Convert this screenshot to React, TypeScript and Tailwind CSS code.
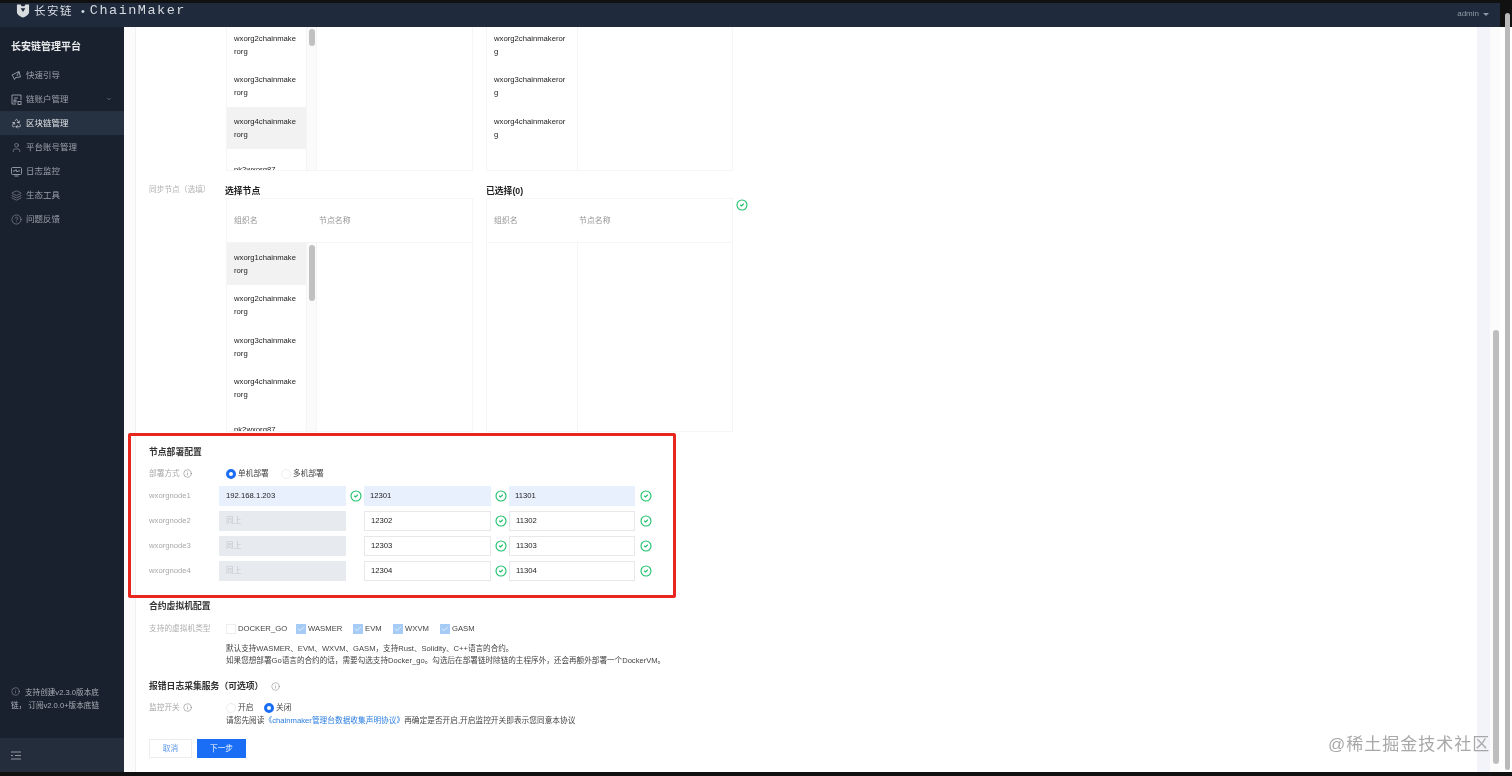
import { ChevronDown, CircleCheck, CircleHelp, Info, Layers, Check, Recycle, User } from 'lucide-react'
import type { ReactNode } from 'react'

const font = { cjk: 'font-["Liberation_Sans","Noto_Sans_CJK_SC",sans-serif]' }

function TagIcon() {
  return (
    <svg width="11" height="11" viewBox="0 0 11 11" fill="none" stroke="currentColor" strokeWidth="0.9">
      <path d="M1 5l7-3.500 1.500 5.500-5 .5-1 2-1.200-2.500L1 5z" />
      <path d="M8 1.500L6 6" />
    </svg>
  )
}

function FileIcon() {
  return (
    <svg width="11" height="11" viewBox="0 0 11 11" fill="none" stroke="currentColor" strokeWidth="0.9">
      <path d="M5 10H1V1h9v5" />
      <path d="M3 4h4" />
      <rect x="3" y="6" width="2" height="2" />
      <rect x="7" y="7.500" width="3" height="3" />
    </svg>
  )
}

function PulseIcon() {
  return (
    <svg width="11" height="11" viewBox="0 0 11 11" fill="none" stroke="currentColor" strokeWidth="0.9">
      <rect x="0.500" y="1.500" width="10" height="7" rx="1" />
      <path d="M2 5h2l1-1.500L6 6l1-1h2M3.500 10h4" />
    </svg>
  )
}

const menu: { label: string; icon: ReactNode; arrow?: boolean; active?: boolean }[] = [
  { label: '快速引导', icon: <TagIcon /> },
  { label: '链账户管理', icon: <FileIcon />, arrow: true },
  { label: '区块链管理', icon: <Recycle size={11} strokeWidth={1.4} />, active: true },
  { label: '平台账号管理', icon: <User size={11} strokeWidth={1.3} /> },
  { label: '日志监控', icon: <PulseIcon /> },
  { label: '生态工具', icon: <Layers size={11} strokeWidth={1.2} /> },
  { label: '问题反馈', icon: <CircleHelp size={11} strokeWidth={1.2} /> },
]

const nodes = [
  { name: 'wxorgnode1', ip: '192.168.1.203', rpc: '12301', p2p: '11301', first: true },
  { name: 'wxorgnode2', ip: '同上', rpc: '12302', p2p: '11302' },
  { name: 'wxorgnode3', ip: '同上', rpc: '12303', p2p: '11303' },
  { name: 'wxorgnode4', ip: '同上', rpc: '12304', p2p: '11304' },
]

const vmTypes = [
  { label: 'DOCKER_GO', on: false, w: 'w-[70px]' },
  { label: 'WASMER', on: true, w: 'w-[57px]' },
  { label: 'EVM', on: true, w: 'w-[40px]' },
  { label: 'WXVM', on: true, w: 'w-[47px]' },
  { label: 'GASM', on: true, w: 'w-[50px]' },
]

function Green() {
  return <CircleCheck size={12} strokeWidth={2.25} className="text-[#1fc06b]" />
}

function Radio({ on, label, w }: { on: boolean; label: string; w: string }) {
  return (
    <div className={`flex items-center gap-[2px] ${w}`}>
      {on ? (
        <span className="h-[10px] w-[10px] rounded-full border-[3px] border-[#1a6ef5] bg-white" />
      ) : (
        <span className="h-[10px] w-[10px] rounded-full border border-[#eeeeee] bg-white" />
      )}
      <span className="text-[7.7px] text-[#444]">{label}</span>
    </div>
  )
}

function OrgRow({ text, selected, late }: { text: string; selected?: boolean; late?: boolean }) {
  return (
    <div
      className={`h-[41.5px] shrink-0 break-all pl-[7px] pr-[8px] text-[7.7px] leading-[13px] text-[#222] ${
        late ? 'pt-[14px]' : 'flex items-center'
      } ${selected ? 'bg-[#f2f2f2]' : ''}`}
    >
      <span>{text}</span>
    </div>
  )
}

// lista de organizaciones con barra de scroll
function LeftBody({ selected, thumb, height, shift }: { selected: number; thumb: string; height: string; shift: string }) {
  const orgs = ['wxorg1chainmakerorg', 'wxorg2chainmakerorg', 'wxorg3chainmakerorg', 'wxorg4chainmakerorg']
  return (
    <div className={`flex w-[247px] overflow-hidden border border-t-0 border-[#f5f5f5] ${height}`}>
      <div className="w-[79px] shrink-0 overflow-hidden">
        <div className={`flex flex-col ${shift}`}>
          {orgs.slice(selected === 0 ? 0 : 1).map((o, i) => (
            <OrgRow key={o} text={o} selected={(selected === 0 ? i : i + 1) === selected} />
          ))}
          <OrgRow text="pk2wxorg87" late />
        </div>
      </div>
      <div className="w-[11px] shrink-0 border-x border-[#f5f5f5] bg-[#fbfbfb] px-[2px] pt-[2px]">
        <div className={`w-[6px] rounded-full bg-[#c1c1c1] ${thumb}`} />
      </div>
    </div>
  )
}

function RightBody({ rows, height, shift }: { rows: string[]; height: string; shift: string }) {
  return (
    <div className={`flex w-[247px] overflow-hidden border border-t-0 border-[#f5f5f5] ${height}`}>
      <div className="w-[91px] shrink-0 overflow-hidden border-r border-[#f5f5f5]">
        <div className={`flex flex-col ${shift}`}>
          {rows.map((o) => (
            <OrgRow key={o} text={o} />
          ))}
        </div>
      </div>
    </div>
  )
}

function TableHead({ split }: { split: string }) {
  return (
    <div className="flex h-[45px] w-[247px] items-center border border-[#f5f5f5] pl-[7px] text-[7.9px] text-[#949494]">
      <span className={split}>组织名</span>
      <span>节点名称</span>
    </div>
  )
}

export default function App() {
  return (
    <div className={`relative flex h-[776px] w-[1512px] flex-col overflow-hidden bg-[#111] blur-[0.35px] ${font.cjk}`}>
      {/* Header */}
      <div className="mt-[3px] flex h-[24px] w-[1500px] shrink-0 items-start justify-between overflow-hidden bg-[#1f2b3d] pl-4 pr-[11px]">
        <div className="flex items-center text-[#d6dae0]">
          <svg width="14" height="15" viewBox="0 0 15 15" fill="#d9dcdf">
            <path d="M1 1h4l1 2h3l1-2h4v8c0 3-4 5-6.500 6C5 14 1 12 1 9z" />
            <path d="M5 5h5l-2.500 4z" fill="#1f2b3d" />
          </svg>
          <span className="ml-[4px] text-[11.5px] leading-[14px] tracking-[1.5px]">长安链</span>
          <span className="ml-[8px] text-[11px] leading-[14px]">•</span>
          <span className="ml-[5px] font-['Liberation_Mono','monospace'] text-[13.5px] leading-[14px] tracking-[1.5px]">ChainMaker</span>
        </div>
        <div className="mt-[5px] flex items-center gap-1 text-[8px] text-[#8f98a5]">
          admin
          <span className="h-0 w-0 border-x-[3px] border-t-[3px] border-x-transparent border-t-[#8f98a5]" />
        </div>
      </div>

      <div className="flex min-h-0 flex-1">
        {/* Sidebar */}
        <aside className="flex w-[124px] shrink-0 flex-col bg-[#1a212e]">
          <div className="pl-[11px] pt-[13px] text-[10px] leading-[14px] font-bold text-[#e8e9eb]">长安链管理平台</div>
          <nav className="mt-[9px] flex flex-col">
            {menu.map((m) => (
              <div
                key={m.label}
                className={`flex h-[24px] items-center gap-[4px] pl-[11px] pr-[12px] text-[8.5px] ${
                  m.active ? 'bg-[#263141] text-[#e4e6ea]' : 'text-[#9aa1ab]'
                }`}
              >
                {m.icon}
                <span className="flex-1">{m.label}</span>
                {m.arrow && <ChevronDown size={6} strokeWidth={2} />}
              </div>
            ))}
          </nav>
          <div className="mt-auto px-[11px] pb-[26px] text-[7.6px] leading-[13px] text-[#a8adb5]">
            <Info size={9} strokeWidth={1.25} className="mr-[5px] inline align-[-1px]" />
            支持创建v2.3.0版本底链， 订阅v2.0.0+版本底链
          </div>
          <div className="flex h-[34px] shrink-0 items-center bg-[#242d3b] pl-[11px]">
            <svg width="10" height="9" viewBox="0 0 10 9" fill="none" stroke="#9097a1" strokeWidth="1">
              <path d="M0 1h10M4 4.500h6M0 8h10M0 4.500h2" />
            </svg>
          </div>
        </aside>

        {/* Content */}
        <main className="relative flex min-w-0 flex-1 bg-white">
          <div className="w-[12px] shrink-0 border-r border-[#f0f0f0] bg-[#fbfbfb]" />
          <div className="min-w-0 flex-1 overflow-hidden pl-[13px]">
            <div className="ml-[77px] flex h-[145px] gap-[13px]">
              <div className="flex h-full flex-col">
                <LeftBody selected={3} thumb="h-[17px]" height="h-[144px]" shift="-mt-[3px]" />
              </div>
              <RightBody
                rows={['wxorg2chainmakerorg', 'wxorg3chainmakerorg', 'wxorg4chainmakerorg']}
                height="h-[144px]"
                shift="-mt-[3px]"
              />
            </div>

            {/* Sync nodes */}
            <div className="mt-[12px] flex">
              <div className="w-[77px] text-[7.7px] leading-[12px] text-[#b0b0b0]">同步节点（选填）</div>
              <div className="flex gap-[13px]">
                <div>
                  <div className="-ml-[1px] h-[14px] pt-[1px] text-[8.8px] leading-[13px] font-bold text-[#222]">选择节点</div>
                  <TableHead split="w-[85px]" />
                  <LeftBody selected={0} thumb="h-[56px]" height="h-[189px]" shift="" />
                </div>
                <div className="relative">
                  <div className="h-[14px] pt-[1px] text-[8.8px] leading-[13px] font-bold text-[#222]">已选择(0)</div>
                  <TableHead split="w-[85px]" />
                  <RightBody rows={[]} height="h-[189px]" shift="" />
                  <div className="absolute left-[250px] top-[15px]">
                    <Green />
                  </div>
                </div>
              </div>
            </div>

            {/* Node deploy */}
            <div className="mt-[14px] h-[12px] text-[8.8px] leading-[12px] font-bold text-[#333]">节点部署配置</div>
            <div className="mt-[10px] flex h-[12px] items-center">
              <div className="flex w-[77px] items-center gap-[3px] text-[7.7px] text-[#a8a8a8]">
                部署方式 <Info size={9} strokeWidth={1.25} className="text-[#666]" />
              </div>
              <Radio on label="单机部署" w="w-[55px]" />
              <Radio on={false} label="多机部署" w="w-[55px]" />
            </div>
            <div className="mt-[6px] flex flex-col gap-[5.500px]">
              {nodes.map((n) => (
                <div key={n.name} className="flex h-[19.500px] items-center">
                  <div className="w-[70px] text-[7.7px] text-[#a8a8a8]">{n.name}</div>
                  <div
                    className={`flex h-full w-[127px] items-center pl-[7px] text-[7.7px] ${
                      n.first ? 'bg-[#e9f0fd] text-[#222]' : 'bg-[#e7eaee] text-[#c3c6cb]'
                    }`}
                  >
                    {n.ip}
                  </div>
                  <div className="flex w-[20px] justify-center">{n.first && <Green />}</div>
                  <div
                    className={`-ml-[2px] flex h-full w-[127px] items-center pl-[6px] text-[7.7px] text-[#222] ${
                      n.first ? 'bg-[#e9f0fd]' : 'border border-[#e8e8e8]'
                    }`}
                  >
                    {n.rpc}
                  </div>
                  <div className="flex w-[20px] justify-center">
                    <Green />
                  </div>
                  <div
                    className={`-ml-[2px] flex h-full w-[126px] items-center pl-[6px] text-[7.7px] text-[#222] ${
                      n.first ? 'bg-[#e9f0fd]' : 'border border-[#e8e8e8]'
                    }`}
                  >
                    {n.p2p}
                  </div>
                  <div className="flex w-[22px] justify-center">
                    <Green />
                  </div>
                </div>
              ))}
            </div>

            {/* Contract VM */}
            <div className="mt-[19.500px] h-[12px] text-[8.8px] leading-[12px] font-bold text-[#333]">合约虚拟机配置</div>
            <div className="mt-[11px] flex h-[12px] items-center">
              <div className="w-[77px] text-[7.7px] text-[#b0b0b0]">支持的虚拟机类型</div>
              {vmTypes.map((v) => (
                <div key={v.label} className={`flex items-center gap-[2px] ${v.w}`}>
                  {v.on ? (
                    <span className="flex h-[10px] w-[10px] items-center justify-center bg-[#a6cbf5]">
                      <Check size={8} strokeWidth={2} className="text-white" />
                    </span>
                  ) : (
                    <span className="h-[10px] w-[10px] border border-[#eeeeee] bg-white" />
                  )}
                  <span className="text-[7.7px] text-[#444]">{v.label}</span>
                </div>
              ))}
            </div>
            <div className="ml-[77px] mt-[8px] text-[7.6px] leading-[12px] text-[#444]">
              <div>默认支持WASMER、EVM、WXVM、GASM，支持Rust、Solidity、C++语言的合约。</div>
              <div>如果您想部署Go语言的合约的话，需要勾选支持Docker_go。勾选后在部署链时除链的主程序外，还会再额外部署一个DockerVM。</div>
            </div>

            {/* Error log */}
            <div className="mt-[13px] flex h-[12px] items-center gap-[6px] text-[8.8px] leading-[12px] font-bold text-[#333]">
              报错日志采集服务（可选项）
              <Info size={9} strokeWidth={1.25} className="ml-[2px] text-[#777]" />
            </div>
            <div className="mt-[10px] flex h-[12px] items-center">
              <div className="flex w-[77px] items-center gap-[3px] text-[7.7px] text-[#a8a8a8]">
                监控开关 <Info size={9} strokeWidth={1.25} className="text-[#666]" />
              </div>
              <Radio on={false} label="开启" w="w-[38px]" />
              <Radio on label="关闭" w="w-[38px]" />
            </div>
            <div className="ml-[77px] mt-[1px] text-[7.7px] leading-[12px] text-[#444]">
              请您先阅读<span className="text-[#2a7de1]">《chainmaker管理台数据收集声明协议》</span>再确定是否开启,开启监控开关即表示您同意本协议
            </div>
            <div className="mt-[12px] flex gap-[5px] text-[7.7px]">
              <button className="h-[19px] w-[43px] border border-[#ececec] bg-white text-[#5b96e8]">取消</button>
              <button className="h-[19px] w-[49px] bg-[#1a6ef5] text-white">下一步</button>
            </div>
          </div>

          {/* Scrollbars */}
          <div className="flex w-[35px] shrink-0">
            <div className="w-[13px] bg-[#f2f4f9]" />
            <div className="flex w-[10px] flex-col bg-[#fbfbfb] pl-[3px] pt-[303px]">
              <div className="h-[434px] w-[6px] rounded-full bg-[#bdbdbd]" />
            </div>
            <div className="w-[12px] bg-white" />
          </div>

          {/* Recuadro rojo de anotación */}
          <div className="pointer-events-none absolute left-[4px] top-[406px] h-[165px] w-[548px] rounded-[2px] border-[3px] border-[#e8261e]" />

          {/* Marca de agua */}
          <div className="pointer-events-none absolute left-[1204px] top-[708px] text-[17px] leading-[20px] tracking-[1px] text-[#a8a8a8]">
            @稀土掘金技术社区
          </div>
        </main>
      </div>
      <div className="h-[4px] shrink-0 bg-[#111]" />

      {/* Scrollbar exterior del navegador */}
      <div className="absolute right-[2px] top-[13px] h-[757px] w-[5px] rounded-full bg-[#b9b9b9]" />
    </div>
  )
}
